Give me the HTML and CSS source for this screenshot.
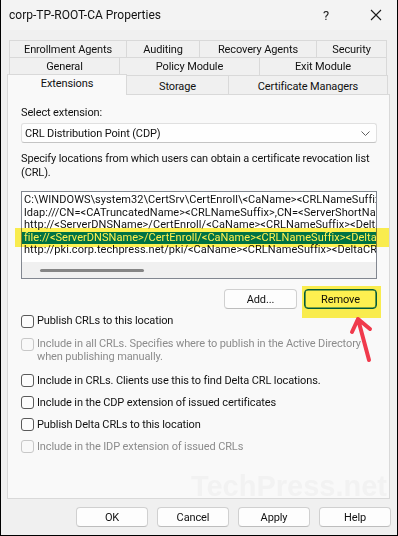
FILE: index.html
```html
<!DOCTYPE html>
<html>
<head>
<meta charset="utf-8">
<link rel="stylesheet" href="styles.css">
</head>
<body>
<div class="win">
  <div class="titlebar">
    <span class="title">corp-TP-ROOT-CA Properties</span>
    <span class="help">?</span>
    <span class="close"><svg width="12" height="12" viewBox="0 0 12 12"><path d="M1 1L11 11M11 1L1 11" stroke="#1a1a1a" stroke-width="1.1" fill="none"/></svg></span>
  </div>
  <div class="content">
    <div class="tabrow r1">
      <div class="tab first w118">Enrollment Agents</div>
      <div class="tab w73">Auditing</div>
      <div class="tab w117">Recovery Agents</div>
      <div class="tab w70">Security</div>
    </div>
    <div class="tabrow r2">
      <div class="tab first w111">General</div>
      <div class="tab w140">Policy Module</div>
      <div class="tab w127">Exit Module</div>
    </div>
    <div class="tabrow r3">
      <div class="tab sel">Extensions</div>
      <div class="tab w102">Storage</div>
      <div class="tab w159">Certificate Managers</div>
    </div>
    <div class="panel">
      <div class="label">Select extension:</div>
      <div class="combo">
        <span>CRL Distribution Point (CDP)</span>
        <svg class="chev" width="9" height="5" viewBox="0 0 9 5"><path d="M0.5 0.5L4.5 4.5L8.5 0.5" stroke="#606060" stroke-width="1" fill="none"/></svg>
      </div>
      <div class="para">Specify locations from which users can obtain a certificate revocation list<br>(CRL).</div>
      <div class="list">
        <div class="items">
          <div class="item">C:\WINDOWS\system32\CertSrv\CertEnroll\&lt;CaName&gt;&lt;CRLNameSuffix&gt;&lt;DeltaCRLAllowed&gt;.crl</div>
          <div class="item">ldap:///CN=&lt;CATruncatedName&gt;&lt;CRLNameSuffix&gt;,CN=&lt;ServerShortName&gt;,CN=CDP,CN=Public Key Services</div>
          <div class="item">http://&lt;ServerDNSName&gt;/CertEnroll/&lt;CaName&gt;&lt;CRLNameSuffix&gt;&lt;DeltaCRLAllowed&gt;.crl</div>
          <div class="item selected">file://&lt;ServerDNSName&gt;/CertEnroll/&lt;CaName&gt;&lt;CRLNameSuffix&gt;&lt;DeltaCRLAllowed&gt;.crl</div>
          <div class="item">http://pki.corp.techpress.net/pki/&lt;CaName&gt;&lt;CRLNameSuffix&gt;&lt;DeltaCRLAllowed&gt;.crl</div>
        </div>
        <div class="hscroll"><div class="thumb"></div></div>
      </div>
      <div class="btnrow">
        <div class="btn">Add...</div>
        <div class="btn focus">Remove</div>
      </div>
      <div class="check c1"><span class="box"></span><span>Publish CRLs to this location</span></div>
      <div class="check c2 disabled"><span class="box"></span><span>Include in all CRLs. Specifies where to publish in the Active Directory<br>when publishing manually.</span></div>
      <div class="check c3"><span class="box"></span><span>Include in CRLs. Clients use this to find Delta CRL locations.</span></div>
      <div class="check c4"><span class="box"></span><span>Include in the CDP extension of issued certificates</span></div>
      <div class="check c4"><span class="box"></span><span>Publish Delta CRLs to this location</span></div>
      <div class="check c4 disabled"><span class="box"></span><span>Include in the IDP extension of issued CRLs</span></div>
      <div class="watermark">TechPress.net</div>
    </div>
    <div class="footer">
      <div class="btn fb">OK</div>
      <div class="btn fb">Cancel</div>
      <div class="btn fb">Apply</div>
      <div class="btn fb">Help</div>
    </div>
  </div>
  <div class="hl hl-row"></div>
  <div class="hl hl-btn"></div>
  <svg class="arrow" width="40" height="60" viewBox="340 310 40 60"><path d="M369 360L358 319M352 332L358 319L370 329" stroke="#f03a4c" stroke-width="4" stroke-linecap="round" stroke-linejoin="round" fill="none"/></svg>
</div>
</body>
</html>
```
FILE: styles.css
```css
* { box-sizing: border-box; }
html, body { margin: 0; padding: 0; }
body {
  width: 398px;
  height: 536px;
  overflow: hidden;
  font-family: Roboto, "Liberation Sans", sans-serif;
  font-size: 11px;
  letter-spacing: -0.12px;
  color: #000;
  background: #f0f0f0;
}
.win {
  position: relative;
  width: 398px;
  height: 536px;
  border: 1px solid #000;
  border-top: none;
  background: #f0f0f0;
  overflow: hidden;
}
.titlebar {
  height: 30px;
  background: #f3f3f3;
  display: flex;
  align-items: center;
  padding-left: 8px;
}
.title { font-size: 12px; letter-spacing: 0; flex: 1; color: #111; }
.help { font-size: 13px; width: 20px; text-align: center; margin-right: 30px; color: #222; }
.close { width: 20px; display: flex; justify-content: center; margin-right: 11px; }
.content {
  padding-top: 10px;
  display: flex;
  flex-direction: column;
}
.tabrow { display: flex; margin-left: 8px; }
.r1 { height: 17px; }
.r2 { height: 18px; }
.r3 { height: 19px; margin-left: 6px; position: relative; z-index: 2; }
.tab {
  border-top: 1px solid #d9d9d9;
  border-right: 1px solid #d9d9d9;
  background: #f0f0f0;
  text-align: center;
  display: flex;
  align-items: center;
  justify-content: center;
  color: #111;
  white-space: nowrap;
}
.tab.first { border-left: 1px solid #d9d9d9; }
.w118 { width: 118px; } .w73 { width: 73px; } .w117 { width: 117px; } .w70 { width: 70px; }
.w111 { width: 111px; } .w140 { width: 140px; } .w127 { width: 127px; }
.w102 { width: 102px; } .w159 { width: 159px; }
.r3 .tab { padding-top: 2px; }
.tab.sel {
  width: 120px;
  height: 21px;
  margin-top: -1px;
  border-left: 1px solid #d9d9d9;
  background: #f9f9f9;
  padding-top: 0;
  padding-bottom: 3px;
}
.panel {
  position: relative;
  margin-left: 6px;
  width: 383px;
  height: 405px;
  border: 1px solid #d9d9d9;
  background: #f9f9f9;
  padding: 11px 11px 0 13px;
  overflow: hidden;
}
.label { line-height: 14px; color: #111; }
.combo {
  margin-top: 3px;
  width: 356px;
  height: 20px;
  border: 1px solid #e0e0e0;
  border-bottom-color: #c4c4c4;
  border-radius: 3px;
  background: #fefefe;
  display: flex;
  align-items: center;
  justify-content: space-between;
  padding: 0 5px 0 3px;
  color: #111;
}
.chev { margin-right: 1px; }
.para { margin-top: 9px; line-height: 14px; white-space: nowrap; color: #111; }
.list {
  margin-top: 11px;
  width: 356px;
  height: 88px;
  border: 1px solid #828790;
  background: #fff;
  display: flex;
  flex-direction: column;
}
.items { flex: 1; padding-top: 2px; overflow: hidden; }
.item {
  line-height: 12.5px;
  height: 12.5px;
  white-space: nowrap;
  padding-left: 2px;
  letter-spacing: 0.05px;
  color: #111;
}
.item.selected { background: #0078d7; color: #fff; }
.hscroll {
  height: 16px;
  background: #f0f0f0;
  display: flex;
  align-items: center;
  padding-left: 18px;
}
.thumb { width: 104px; height: 3px; border-radius: 2px; background: #858585; }
.btnrow {
  margin-top: 10px;
  width: 356px;
  display: flex;
  justify-content: flex-end;
  gap: 7px;
}
.btn {
  width: 73px;
  height: 20px;
  border: 1px solid #d0d0d0;
  border-bottom-color: #bdbdbd;
  border-radius: 4px;
  background: #fdfdfd;
  display: flex;
  align-items: center;
  justify-content: center;
  color: #111;
}
.btn.focus { border: 1px solid #005fb8; box-shadow: inset 0 0 0 0.6px #005fb8; }
.check {
  display: flex;
  align-items: flex-start;
  line-height: 14px;
  color: #111;
}
.box {
  width: 13px;
  height: 13px;
  border: 1px solid #5a5a5a;
  border-radius: 3px;
  background: #fcfcfc;
  margin-right: 3px;
  margin-top: 0.5px;
  flex: none;
}
.c1 { margin-top: 5px; }
.c2 { margin-top: 10px; line-height: 12.5px; }
.c2 .box { margin-top: 0; }
.c3 { margin-top: 10.5px; }
.c4 { margin-top: 8px; }
.disabled { color: #8c8c8c; }
.disabled .box { border-color: #c8c8c8; background: #f9f9f9; }
.watermark {
  position: absolute;
  right: 2px;
  bottom: -5px;
  font-family: "Liberation Sans", sans-serif;
  font-weight: bold;
  font-size: 29px;
  letter-spacing: 0;
  color: #f2f2f2;
  white-space: nowrap;
}
.footer {
  margin-top: 8px;
  display: flex;
  justify-content: flex-end;
  gap: 9px;
  padding-right: 6px;
}
.fb { width: 72px; }
.hl {
  position: absolute;
  background: #fff250;
  mix-blend-mode: multiply;
  pointer-events: none;
}
.hl-row { left: 14px; top: 228px; width: 374px; height: 19px; }
.hl-btn { left: 301px; top: 286px; width: 79px; height: 32px; }
.arrow { position: absolute; left: 339px; top: 310px; }
```
